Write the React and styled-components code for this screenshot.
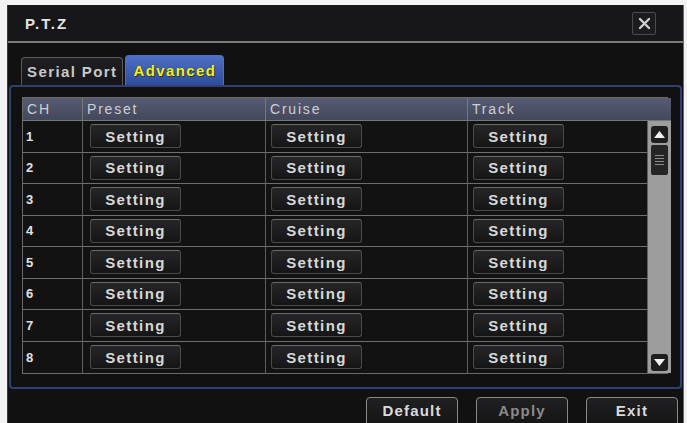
import React from "react";
import styled, { createGlobalStyle } from "styled-components";

const GlobalStyle = createGlobalStyle`
  body {
    margin: 0;
    background: #f2f2f2;
    overflow: hidden;
    font-family: "Liberation Sans", Arial, sans-serif;
  }
`;

const rows = [1, 2, 3, 4, 5, 6, 7, 8];

const Window = styled.div`
  margin: 5px 0 0 7px;
  width: 675px;
  height: 430px;
  background: #111112;
  border-left: 1px solid #3a3a3a;
  border-right: 1px solid #6a6a6a;
  display: flex;
  flex-direction: column;
`;

const TitleBar = styled.div`
  height: 36px;
  display: flex;
  align-items: center;
  justify-content: space-between;
  padding: 0 27px 0 17px;
  background: #17171a;
  border-bottom: 2px solid #7a7a7a;
`;

const Title = styled.span`
  color: #e4e4e4;
  font-weight: bold;
  font-size: 15px;
  letter-spacing: 2px;
`;

const CloseBox = styled.div`
  width: 22px;
  height: 21px;
  border: 1px solid #4a4a4a;
  border-radius: 2px;
  background: #1c1c1e;
  display: flex;
  align-items: center;
  justify-content: center;
`;

const Tabs = styled.div`
  display: flex;
  align-items: flex-end;
  gap: 2px;
  padding: 12px 0 0 13px;
`;

const Tab = styled.div`
  height: ${p => (p.$active ? 30 : 28)}px;
  padding: 0 ${p => (p.$active ? 7 : 5)}px;
  display: flex;
  align-items: center;
  box-sizing: border-box;
  font-size: 15px;
  font-weight: bold;
  letter-spacing: 1.4px;
  border-radius: 4px 4px 0 0;
  border: 1px solid ${p => (p.$active ? "#4f6fc0" : "#5a5a5a")};
  border-bottom: none;
  background: ${p =>
    p.$active
      ? "linear-gradient(#4d6fc4, #2e4c9c)"
      : "linear-gradient(#202022, #151517)"};
  color: ${p => (p.$active ? "#f0f020" : "#c9c9c9")};
  text-shadow: ${p => (p.$active ? "0 0 1px #333, 1px 1px 0 #333" : "none")};
`;

const Panel = styled.div`
  margin: 0 1px;
  height: 304px;
  box-sizing: border-box;
  border: 2px solid #2f3f72;
  border-radius: 4px;
  padding: 10px 12px 0 11px;
`;

const Table = styled.div`
  display: grid;
  grid-template-columns: 60px 183px 202px 180px 23px;
  grid-template-rows: 23px repeat(8, 31.5px);
  border: 1px solid #6a6a6a;
`;

const HeadCell = styled.div`
  display: flex;
  align-items: center;
  padding-left: 4px;
  font-size: 14px;
  letter-spacing: 1.8px;
  color: #cfd0d6;
  background: linear-gradient(#565b72, #44485c);
  border-right: ${p => (p.$last ? "none" : "1px solid #777")};
  border-bottom: 1px solid #777;
  grid-column: ${p => p.$span || "auto"};
`;

const Cell = styled.div`
  display: flex;
  align-items: center;
  padding-left: ${p => (p.$ch ? 3 : p.$pad || 5)}px;
  font-size: 13px;
  font-weight: bold;
  color: #e2e2e2;
  border-right: 1px solid #5e5e5e;
  border-bottom: ${p => (p.$lastRow ? "none" : "1px solid #6e6e6e")};
  background: #121213;
`;

const SetButton = styled.div`
  width: 91px;
  height: 24px;
  box-sizing: border-box;
  display: flex;
  align-items: center;
  justify-content: center;
  font-size: 15px;
  font-weight: bold;
  letter-spacing: 1.4px;
  color: #d8d8d8;
  border: 1px solid #4a4a4a;
  border-top-color: #6a6a6a;
  border-radius: 3px;
  background: linear-gradient(#262628, #151516);
`;

const ScrollTrack = styled.div`
  grid-column: 5;
  grid-row: 2 / span 8;
  background: #9d9d9d;
  display: flex;
  flex-direction: column;
  align-items: center;
  padding: 5px 0 2px;
`;

const ScrollBtn = styled.div`
  width: 17px;
  height: 17px;
  background: #1e1e20;
  border-radius: 3px;
  display: flex;
  align-items: center;
  justify-content: center;
`;

const Thumb = styled.div`
  width: 17px;
  height: 30px;
  margin-top: 2px;
  background: #252527;
  border-radius: 2px;
  display: flex;
  flex-direction: column;
  align-items: center;
  justify-content: center;
  gap: 2px;
  & > span {
    width: 9px;
    height: 1px;
    background: #8a8a8a;
  }
`;

const Spacer = styled.div`
  flex: 1;
`;

const Footer = styled.div`
  display: flex;
  justify-content: flex-end;
  gap: 18px;
  padding: 8px 5px 0 0;
`;

const FootButton = styled.div`
  width: 92px;
  height: 30px;
  box-sizing: border-box;
  display: flex;
  justify-content: center;
  padding-top: 4px;
  font-size: 15px;
  font-weight: bold;
  letter-spacing: 1.2px;
  color: ${p => (p.$disabled ? "#8a8a8a" : "#dadada")};
  border: 1px solid #8a8a8a;
  border-radius: 4px;
  background: linear-gradient(#202022, #141415);
`;

const Tri = ({ up }) => (
  <svg width="11" height="7" viewBox="0 0 11 7">
    <path d={up ? "M0 7 L5.5 0 L11 7 Z" : "M0 0 L5.5 7 L11 0 Z"} fill="#f2f2f2" />
  </svg>
);

export default function App() {
  return (
    <>
      <GlobalStyle />
      <Window>
        <TitleBar>
          <Title>P.T.Z</Title>
          <CloseBox>
            <svg width="13" height="13" viewBox="0 0 13 13">
              <path d="M2 2 L11 11 M11 2 L2 11" stroke="#cfcfcf" strokeWidth="2.4" strokeLinecap="round" />
            </svg>
          </CloseBox>
        </TitleBar>
        <Tabs>
          <Tab>Serial Port</Tab>
          <Tab $active>Advanced</Tab>
        </Tabs>
        <Panel>
          <Table>
            <HeadCell>CH</HeadCell>
            <HeadCell>Preset</HeadCell>
            <HeadCell>Cruise</HeadCell>
            <HeadCell $span="4 / span 2" $last>Track</HeadCell>
            {rows.map(n => (
              <React.Fragment key={n}>
                <Cell $ch $lastRow={n === 8}>{n}</Cell>
                <Cell $pad={7} $lastRow={n === 8}><SetButton>Setting</SetButton></Cell>
                <Cell $lastRow={n === 8}><SetButton>Setting</SetButton></Cell>
                <Cell $lastRow={n === 8}><SetButton>Setting</SetButton></Cell>
              </React.Fragment>
            ))}
            <ScrollTrack>
              <ScrollBtn><Tri up /></ScrollBtn>
              <Thumb><span /><span /><span /><span /></Thumb>
              <Spacer />
              <ScrollBtn><Tri /></ScrollBtn>
            </ScrollTrack>
          </Table>
        </Panel>
        <Footer>
          <FootButton>Default</FootButton>
          <FootButton $disabled>Apply</FootButton>
          <FootButton>Exit</FootButton>
        </Footer>
      </Window>
    </>
  );
}
